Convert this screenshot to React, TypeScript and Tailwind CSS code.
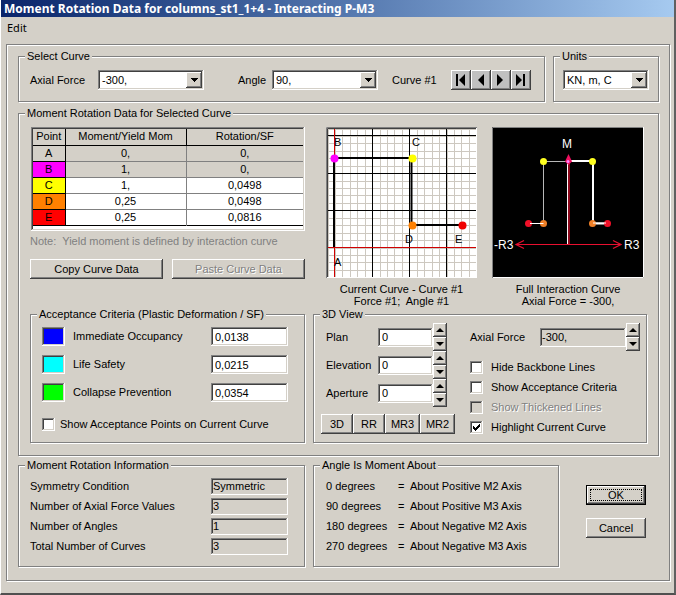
import { useState } from 'react';
import type { ReactNode } from 'react';

const RAISED = 'bg-[#d4d0c8] shadow-[inset_-1px_-1px_0_#404040,inset_1px_1px_0_#fff,inset_-2px_-2px_0_#808080]';
const SUNKEN = 'shadow-[inset_-1px_-1px_0_#fff,inset_1px_1px_0_#808080,inset_-2px_-2px_0_#d4d0c8,inset_2px_2px_0_#404040]';
const ETCHED = 'border border-[#808080] shadow-[1px_1px_0_#fff,inset_1px_1px_0_#fff]';
const DISABLED_TEXT = 'text-[#808080] [text-shadow:1px_1px_0_#fff]';

const curvePoints = [
  { point: 'A', moment: '0,', rotation: '0,', color: 'bg-[#d4d0c8]', locked: true },
  { point: 'B', moment: '1,', rotation: '0,', color: 'bg-[#ff00ff]', locked: true },
  { point: 'C', moment: '1,', rotation: '0,0498', color: 'bg-[#ffff00]', locked: false },
  { point: 'D', moment: '0,25', rotation: '0,0498', color: 'bg-[#ff8000]', locked: false },
  { point: 'E', moment: '0,25', rotation: '0,0816', color: 'bg-[#ff0000]', locked: false },
];

const criteria = [
  { id: 'io', label: 'Immediate Occupancy', value: '0,0138', color: 'bg-[#0000ff]' },
  { id: 'ls', label: 'Life Safety', value: '0,0215', color: 'bg-[#00ffff]' },
  { id: 'cp', label: 'Collapse Prevention', value: '0,0354', color: 'bg-[#00ff00]' },
];

const info = [
  { id: 'symmetry', label: 'Symmetry Condition', value: 'Symmetric' },
  { id: 'forces', label: 'Number of Axial Force Values', value: '3' },
  { id: 'angles', label: 'Number of Angles', value: '1' },
  { id: 'curves', label: 'Total Number of Curves', value: '3' },
];

const angleAxes = [
  ['0 degrees', 'About Positive M2 Axis'],
  ['90 degrees', 'About Positive M3 Axis'],
  ['180 degrees', 'About Negative M2 Axis'],
  ['270 degrees', 'About Negative M3 Axis'],
];

const navIcons = [
  { label: 'First curve', d: 'M5 4h2v12h-2zM14 4v12l-6 -6z' },
  { label: 'Previous curve', d: 'M13 4v12l-6 -6z' },
  { label: 'Next curve', d: 'M6 4v12l6 -6z' },
  { label: 'Last curve', d: 'M5 4v12l6 -6zM12 4h2v12h-2z' },
];

function Group({ title, className = '', children }: { title: string; className?: string; children: ReactNode }) {
  return (
    <fieldset className={`${ETCHED} ${className}`}>
      <legend className="ml-1.5 bg-[#d4d0c8] px-0.5 leading-[13px]">{title}</legend>
      {children}
    </fieldset>
  );
}

function Combo({ id, label, options, className }: { id: string; label?: string; options: string[]; className: string }) {
  return (
    <div className={`relative h-5 ${className}`}>
      <select id={id} aria-label={label} className={`block h-full w-full appearance-none bg-white pl-1 pr-5 outline-none ${SUNKEN}`}>
        {options.map((o) => <option key={o}>{o}</option>)}
      </select>
      <span className={`pointer-events-none absolute inset-y-0.5 right-0.5 flex w-4 items-center justify-center ${RAISED}`}>
        <svg width="7" height="4" viewBox="0 0 7 4" shapeRendering="crispEdges"><path d="M0 0h7v1h-1v1h-1v1h-1v1h-1v-1h-1v-1h-1v-1h-1z" /></svg>
      </span>
    </div>
  );
}

function Spinner({ name }: { name: string }) {
  return (
    <div className="flex h-7 w-3.5 flex-col">
      <button type="button" aria-label={`Increase ${name}`} className={`flex h-3.5 items-center justify-center ${RAISED}`}>
        <svg width="8" height="4" viewBox="0 0 8 4"><path d="M4 0l4 4h-8z" /></svg>
      </button>
      <button type="button" aria-label={`Decrease ${name}`} className={`flex h-3.5 items-center justify-center ${RAISED}`}>
        <svg width="8" height="4" viewBox="0 0 8 4"><path d="M0 0h8l-4 4z" /></svg>
      </button>
    </div>
  );
}

function Check({ label, defaultChecked = false, disabled = false, className = '' }: { label: string; defaultChecked?: boolean; disabled?: boolean; className?: string }) {
  const [checked, setChecked] = useState(defaultChecked);
  return (
    <label className={`flex h-5 items-center ${className} ${disabled ? DISABLED_TEXT : ''}`}>
      <span className="relative block size-[13px]">
        <input
          type="checkbox"
          checked={checked}
          disabled={disabled}
          onChange={(e) => setChecked(e.target.checked)}
          className={`block size-[13px] appearance-none ${SUNKEN} ${disabled ? 'bg-[#d4d0c8]' : 'bg-white'}`}
        />
        {checked && (
          <svg className="pointer-events-none absolute inset-0" width="13" height="13" viewBox="0 0 13 13" shapeRendering="crispEdges">
            <path d="M3 5h1v1h1v1h1v-1h1v-1h1v-1h1v-1h1v3h-1v1h-1v1h-1v1h-1v1h-1v-1h-1v-1h-1z" />
          </svg>
        )}
      </span>
      <span>{label}</span>
    </label>
  );
}

function CurrentCurve() {
  const minor = Array.from({ length: 20 }, (_, i) => Math.round(1.5 + i * 7.44) + 0.5);
  return (
    <svg width="151" height="151" viewBox="0 0 151 151" className="block" role="img" aria-label="Current curve">
      <rect width="151" height="151" fill="#fff" />
      {minor.map((p) => (
        <path key={p} d={`M${p} 0V151M0 ${p}H151`} stroke="#cdc8c0" />
      ))}
      <path d="M46.5 0V151M83.5 0V151M120.5 0V151M0 8.5H151M0 46.5H151M0 83.5H151" stroke="#000" />
      <path d="M8.5 0V151M0 120.5H151" stroke="#d00000" />
      <path d="M8 120V31H85.5V98H136" fill="none" stroke="#000" strokeWidth="2" />
      <circle cx="8.5" cy="31.5" r="4" fill="#ff00ff" />
      <circle cx="86.5" cy="31.5" r="4" fill="#ffff00" />
      <circle cx="86.5" cy="98.5" r="4" fill="#ff8000" />
      <circle cx="136.5" cy="98.5" r="4" fill="#f00000" />
      <g fontSize="11" fill="#000">
        <text x="8" y="139">A</text>
        <text x="8" y="19">B</text>
        <text x="86" y="19">C</text>
        <text x="79" y="116">D</text>
        <text x="129" y="116">E</text>
      </g>
      <path d="M0 150.5H150.5V0" fill="none" stroke="#fff" />
      <path d="M0.5 151V0.5H151" fill="none" stroke="#808080" />
      <path d="M1.5 150V1.5H150" fill="none" stroke="#404040" />
    </svg>
  );
}

function InteractionCurve() {
  return (
    <svg width="152" height="151" viewBox="0 0 152 151" className="block" role="img" aria-label="Full interaction curve">
      <rect width="152" height="151" fill="#000" />
      <path d="M77 34V117M24 117.5H129M32 113.5L24 117.5L32 121.5M121 113.5L129 117.5L121 121.5" fill="none" stroke="#e81030" strokeWidth="1.2" />
      <path d="M75.5 34.5H51.5V96.5H36" fill="none" stroke="#b8b8b8" />
      <path d="M77 34H101V96.5H116" fill="none" stroke="#fff" strokeWidth="2" />
      <path d="M75.5 34V117" stroke="#fff" />
      <path d="M76.5 27L80 34.5L76.5 38L73 34.5z" fill="#f01060" />
      <circle cx="76" cy="34.5" r="1.5" fill="#ff80ff" />
      <g fill="#ffff20">
        <circle cx="51.5" cy="34.5" r="3.5" />
        <circle cx="100.5" cy="34.5" r="3.5" />
      </g>
      <g fill="#f08028">
        <circle cx="51.5" cy="96.5" r="3.5" />
        <circle cx="100.5" cy="96.5" r="3.5" />
      </g>
      <g fill="#f01028">
        <circle cx="36.5" cy="96.5" r="3.5" />
        <circle cx="115.5" cy="96.5" r="3.5" />
      </g>
      <path d="M51.5 96.5H38M101 96H114" stroke="#fff" />
      <g fontSize="12" fill="#fff">
        <text x="75" y="21" textAnchor="middle">M</text>
        <text x="2" y="122">-R3</text>
        <text x="132" y="122">R3</text>
      </g>
      <path d="M0 150.5H151.5V0" fill="none" stroke="#fff" />
      <path d="M0.5 151V0.5H151" fill="none" stroke="#808080" />
    </svg>
  );
}

export default function App() {
  return (
    <div className="border-b-2 border-l border-r-2 border-b-[#505050] border-l-white border-r-[#606060] bg-[#d4d0c8] pb-3 font-['Liberation_Sans',Arial,sans-serif] text-[11px] leading-[13px] text-black">
      <header className="flex h-[17px] items-center bg-linear-to-r from-[#0a246a] to-[#a6caf0] pl-[3px]">
        <h1 className="whitespace-nowrap font-['Noto_Sans',sans-serif] text-[12px] font-bold text-white">
          Moment Rotation Data for columns_st1_1+4 - Interacting P-M3
        </h1>
      </header>
      <nav className="flex h-5 items-center pl-1.5 font-['Noto_Sans',sans-serif]">
        <button type="button">Edit</button>
      </nav>

      <main className={`ml-[5px] mr-1 mt-[7px] pb-[13px] pl-[11px] pr-[10px] pt-[5px] ${ETCHED}`}>
        <div className="flex gap-2">
          <Group title="Select Curve" className="flex-1">
            <div className="flex items-center pb-[11px] pl-[11px] pt-[7px]">
              <label htmlFor="axial" className="w-[68px]">Axial Force</label>
              <Combo id="axial" options={['-300,', '0,', '300,']} className="w-[106px]" />
              <label htmlFor="angle" className="ml-[34px] w-[34px]">Angle</label>
              <Combo id="angle" options={['90,']} className="w-[106px]" />
              <span className="ml-[14px] w-[59px]">Curve #1</span>
              <div className="flex">
                {navIcons.map((n) => (
                  <button key={n.label} type="button" aria-label={n.label} className="size-5 bg-[#c0c0c0] shadow-[inset_-1px_-1px_0_#404040,inset_1px_1px_0_#fff,inset_-2px_-2px_0_#808080]">
                    <svg width="20" height="20" viewBox="0 0 20 20"><path d={n.d} /></svg>
                  </button>
                ))}
              </div>
            </div>
          </Group>
          <Group title="Units" className="w-[106px]">
            <div className="px-[9px] pt-[7px]">
              <Combo id="units" label="Units" options={['KN, m, C']} className="w-full" />
            </div>
          </Group>
        </div>

        <Group title="Moment Rotation Data for Selected Curve" className="mt-[5px]">
          <div className="px-[11px] pb-3">
            <div className="flex pb-px pt-[7px]">
              <div className="w-[275px]">
                <div className={`ml-px h-[104px] bg-white p-0.5 ${SUNKEN}`}>
                  <table className="w-full table-fixed border-collapse text-center">
                    <thead>
                      <tr className="h-4 border-b border-black bg-[#d4d0c8]">
                        <th className="w-8 border-r border-black p-0 font-normal">Point</th>
                        <th className="w-[121px] border-r border-black p-0 font-normal">Moment/Yield Mom</th>
                        <th className="p-0 font-normal">Rotation/SF</th>
                      </tr>
                    </thead>
                    <tbody>
                      {curvePoints.map((c) => (
                        <tr key={c.point} className={`h-4 border-b border-[#808080] last:border-black ${c.locked ? 'bg-[#d4d0c8]' : 'bg-white'}`}>
                          <td className={`border-b border-r border-black p-0 ${c.color}`}>{c.point}</td>
                          <td className="border-r border-[#808080] p-0">{c.moment}</td>
                          <td className="p-0">{c.rotation}</td>
                        </tr>
                      ))}
                    </tbody>
                  </table>
                </div>
                <p className="mt-1 text-[#808080]">Note:&nbsp; Yield moment is defined by interaction curve</p>
                <div className="mt-[11px] flex gap-[9px]">
                  <button type="button" className={`h-5 flex-1 ${RAISED}`}>Copy Curve Data</button>
                  <button type="button" disabled className={`h-5 flex-1 ${RAISED} ${DISABLED_TEXT}`}>Paste Curve Data</button>
                </div>
              </div>
              <figure className="ml-[21px]">
                <CurrentCurve />
                <figcaption className="mt-[5px] text-center leading-3">Current Curve - Curve #1<br />Force #1;&nbsp; Angle #1</figcaption>
              </figure>
              <figure className="ml-[15px]">
                <InteractionCurve />
                <figcaption className="mt-[5px] text-center leading-3">Full Interaction Curve<br />Axial Force = -300,</figcaption>
              </figure>
            </div>

            <div className="flex gap-2">
              <Group title="Acceptance Criteria (Plastic Deformation / SF)" className="w-[275px]">
                <div className="flex flex-col gap-[9px] pl-[11px] pt-1.5">
                  {criteria.map((c) => (
                    <div key={c.id} className="flex h-[19px] items-center">
                      <span className={`h-full w-[23px] ${c.color} ${SUNKEN}`} />
                      <label htmlFor={c.id} className="ml-2 w-[138px]">{c.label}</label>
                      <input id={c.id} defaultValue={c.value} className={`h-full w-[77px] bg-white px-1 outline-none ${SUNKEN}`} />
                    </div>
                  ))}
                </div>
                <Check label="Show Acceptance Points on Current Curve" className="ml-[11px] mt-3 gap-[5px]" />
              </Group>

              <Group title="3D View" className="flex-1">
                <div className="flex pb-[5px] pt-0.5">
                  <div className="w-[156px]">
                    {['Plan', 'Elevation', 'Aperture'].map((name) => (
                      <div key={name} className="flex h-7 items-center pl-3">
                        <label htmlFor={name} className="w-[52px]">{name}</label>
                        <input id={name} defaultValue="0" className={`h-[19px] w-[55px] bg-white px-1 outline-none ${SUNKEN}`} />
                        <Spinner name={name} />
                      </div>
                    ))}
                    <div className="mt-[7px] flex pl-[7px]">
                      <button type="button" className={`h-5 w-8 ${RAISED}`}>3D</button>
                      <button type="button" className={`h-5 w-8 ${RAISED}`}>RR</button>
                      <button type="button" className={`h-5 w-[35px] ${RAISED}`}>MR3</button>
                      <button type="button" className={`h-5 w-[35px] ${RAISED}`}>MR2</button>
                    </div>
                  </div>
                  <div>
                    <div className="flex h-7 items-center">
                      <label htmlFor="viewForce" className="w-[70px]">Axial Force</label>
                      <input id="viewForce" readOnly value="-300," className={`h-[19px] w-[86px] bg-[#d4d0c8] px-0.5 outline-none ${SUNKEN}`} />
                      <Spinner name="Axial Force" />
                    </div>
                    <div className="mt-1.5">
                      <Check label="Hide Backbone Lines" className="gap-2" />
                      <Check label="Show Acceptance Criteria" className="gap-2" />
                      <Check label="Show Thickened Lines" disabled className="gap-2" />
                      <Check label="Highlight Current Curve" defaultChecked className="gap-2" />
                    </div>
                  </div>
                </div>
              </Group>
            </div>
          </div>
        </Group>

        <div className="mt-[3px] flex gap-2">
          <Group title="Moment Rotation Information" className="w-[287px]">
            <div className="pb-[10px] pl-[11px] pt-1">
              {info.map((i) => (
                <div key={i.id} className="flex h-5 items-center">
                  <label htmlFor={i.id} className="w-[181px]">{i.label}</label>
                  <input id={i.id} readOnly value={i.value} className={`h-[17px] w-[77px] bg-[#d4d0c8] px-0.5 outline-none ${SUNKEN}`} />
                </div>
              ))}
            </div>
          </Group>
          <Group title="Angle Is Moment About" className="flex-1">
            <dl className="pl-3 pt-1">
              {angleAxes.map(([angle, axis]) => (
                <div key={angle} className="flex h-5 items-center">
                  <dt className="w-[72px]">{angle}</dt>
                  <dd>=&nbsp; {axis}</dd>
                </div>
              ))}
            </dl>
          </Group>
          <div className="flex w-[92px] flex-col gap-[13px] pl-[19px] pt-[26px]">
            <button type="button" className={`h-5 w-[60px] border border-black p-[3px] ${RAISED}`}>
              <span className="flex h-full items-center justify-center border border-dotted border-black">OK</span>
            </button>
            <button type="button" className={`h-5 w-[60px] ${RAISED}`}>Cancel</button>
          </div>
        </div>
      </main>
    </div>
  );
}
